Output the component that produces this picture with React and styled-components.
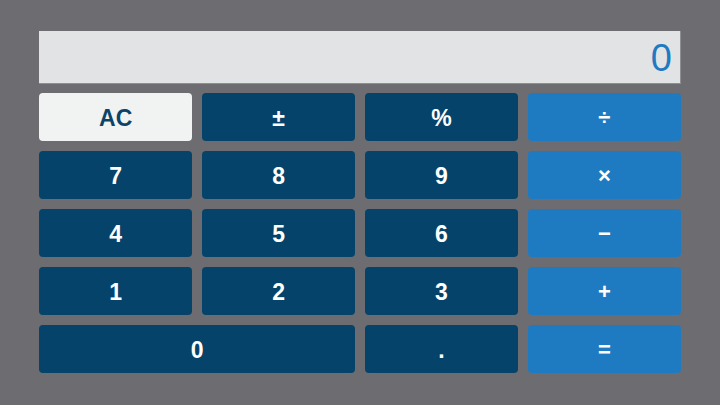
import React, { useState } from "react";
import styled, { createGlobalStyle } from "styled-components";

const GlobalStyle = createGlobalStyle`
    html, body {
        margin: 0;
        padding: 0;
        background: #6d6d71;
    }
    body {
        font-family: "Liberation Sans", Arial, sans-serif;
    }
`;

// 키패드 배치: [라벨, 종류, 가로 칸 수]
const keys = [
    ["AC", "clear"],
    ["±", "func"],
    ["%", "func"],
    ["÷", "op"],
    ["7", "num"],
    ["8", "num"],
    ["9", "num"],
    ["×", "op"],
    ["4", "num"],
    ["5", "num"],
    ["6", "num"],
    ["−", "op"],
    ["1", "num"],
    ["2", "num"],
    ["3", "num"],
    ["+", "op"],
    ["0", "num", 2],
    [".", "num"],
    ["=", "op"],
];

function App() {
    const [display] = useState("0");

    return (
        <>
            <GlobalStyle />
            <Page>
                <Calculator>
                    <Display>{display}</Display>
                    <Keypad>
                        {keys.map(([label, kind, span], idx) => (
                            <Key key={`key-${idx}`} $kind={kind} $span={span || 1}>
                                {label}
                            </Key>
                        ))}
                    </Keypad>
                </Calculator>
            </Page>
        </>
    );
}

const Page = styled.div`
    width: 720px;
    height: 405px;
    box-sizing: border-box;
    padding: 31px 39px 0 39px;
`;

const Calculator = styled.div`
    display: flex;
    flex-direction: column;
    gap: 9px;
`;

const Display = styled.div`
    height: 53px;
    box-sizing: border-box;
    background: #e2e3e5;
    border-right: 1px solid #8e8f92;
    border-bottom: 1px solid #8e8f92;
    display: flex;
    align-items: center;
    justify-content: flex-end;
    padding: 2px 8px 0 0;
    font-family: "Liberation Sans", Arial, sans-serif;
    font-weight: 400;
    font-size: 38px;
    color: #1f7bc1;
`;

const Keypad = styled.div`
    display: grid;
    grid-template-columns: repeat(4, 1fr);
    grid-auto-rows: 48px;
    column-gap: 9.6px;
    row-gap: 10px;
`;

const keyColors = {
    clear: { bg: "#f1f3f3", fg: "#0c4469" },
    func: { bg: "#06436a", fg: "#ffffff" },
    num: { bg: "#06436a", fg: "#ffffff" },
    op: { bg: "#1f7bc1", fg: "#ffffff" },
};

const Key = styled.button`
    grid-column: span ${(p) => p.$span};
    border: none;
    border-radius: 4px;
    margin: 0;
    padding: 2px 0 0 0;
    background: ${(p) => keyColors[p.$kind].bg};
    color: ${(p) => keyColors[p.$kind].fg};
    font-family: "Liberation Sans", Arial, sans-serif;
    font-weight: bold;
    font-size: ${(p) => (p.$kind === "op" ? "22px" : "23px")};
    display: flex;
    align-items: center;
    justify-content: center;
    cursor: pointer;
`;

export default App;
